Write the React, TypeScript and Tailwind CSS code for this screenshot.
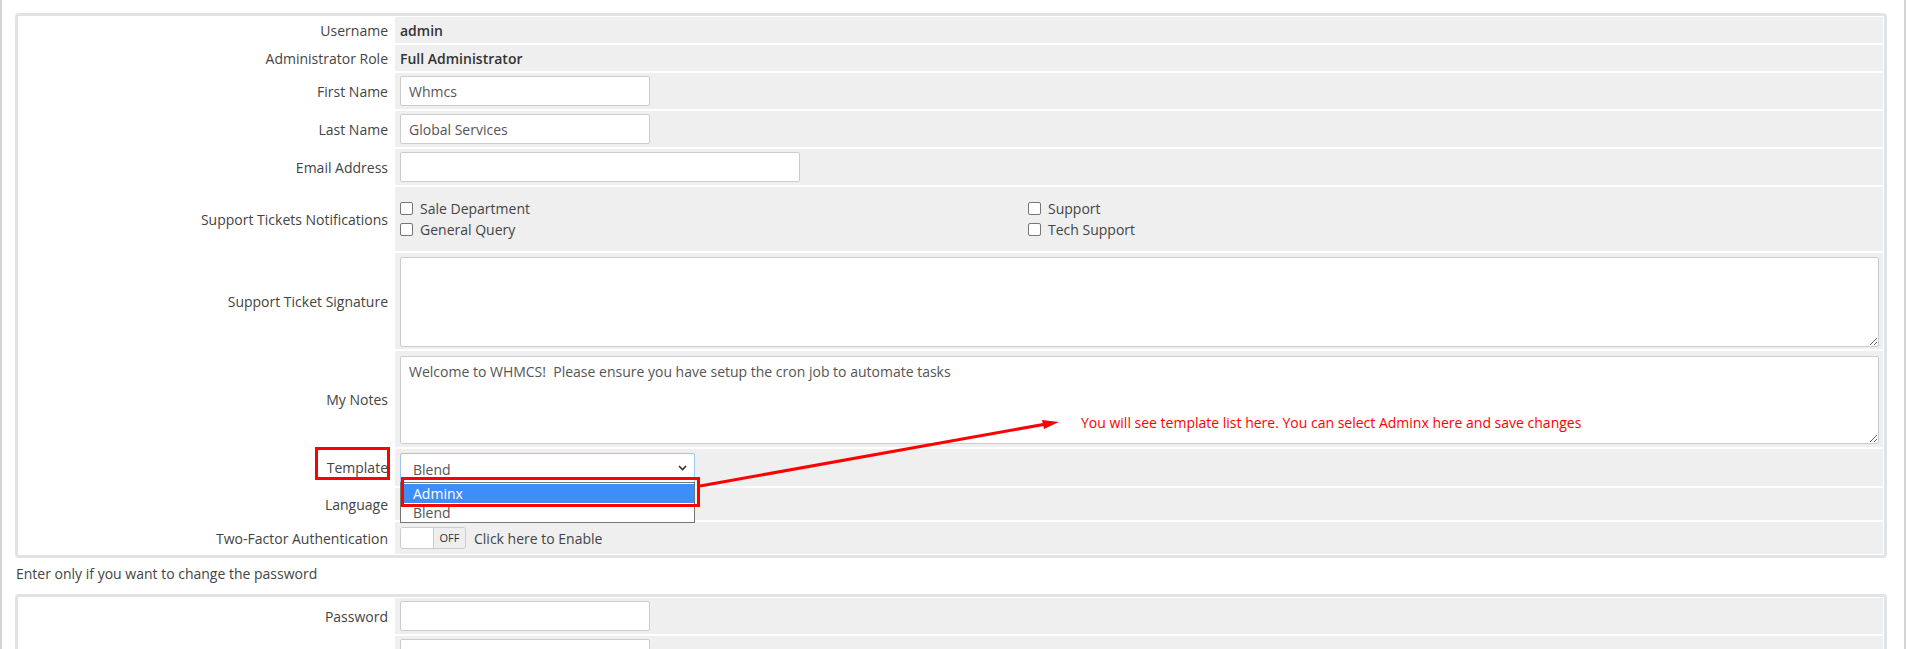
import React from 'react';

type RowProps = {
  label: string;
  h: string;
  align?: string;
  children?: React.ReactNode;
};

const Row: React.FC<RowProps> = ({ label, h, align = 'items-center', children }) => (
  <>
    <div className={`flex items-center justify-end pr-[5px] text-[#444] ${h}`}>{label}</div>
    <div className={`flex ${align} bg-[#efefef] pl-[5px] ${h}`}>{children}</div>
  </>
);

const TextInput: React.FC<{ value?: string; width: string }> = ({ value = '', width }) => (
  <input
    readOnly
    value={value}
    className={`${width} h-[30px] bg-white border border-[#ccc] rounded-[2px] px-[8px] text-[14px] text-[#555] outline-none`}
  />
);

const Check: React.FC<{ label: string }> = ({ label }) => (
  <div className="flex items-center gap-[7px]">
    <span className="w-[13px] h-[13px] rounded-[2px] border border-[#767676] bg-white" />
    <span>{label}</span>
  </div>
);

const Chevron = () => (
  <svg width="9" height="6" viewBox="0 0 9 6" className="text-[#333]">
    <path d="M1 1 L4.5 4.5 L8 1" fill="none" stroke="currentColor" strokeWidth="1.6" />
  </svg>
);

export default function App() {
  return (
    <div className="relative min-h-[649px] bg-white border-l-2 border-r-2 border-[#d4d4d4] pl-[13px] pr-[17px] pt-[13px] pb-6 font-['Open_Sans',sans-serif] text-[14px] text-[#333]">
      {/* Profile box */}
      <div className="rounded-[4px] border-[3px] border-[#e1e4e7] p-[1px]">
        <div className="grid grid-cols-[374px_1fr] gap-[2px]">
          <Row label="Username" h="h-[26px]">
            <span className="font-semibold">admin</span>
          </Row>
          <Row label="Administrator Role" h="h-[26px]">
            <span className="font-semibold">Full Administrator</span>
          </Row>
          <Row label="First Name" h="h-[36px]">
            <TextInput value="Whmcs" width="w-[250px]" />
          </Row>
          <Row label="Last Name" h="h-[36px]">
            <TextInput value="Global Services" width="w-[250px]" />
          </Row>
          <Row label="Email Address" h="h-[36px]">
            <TextInput width="w-[400px]" />
          </Row>
          <Row label="Support Tickets Notifications" h="h-[64px]">
            <div className="grid grid-cols-[628px_1fr] leading-[21px] text-[#444]">
              <div>
                <Check label="Sale Department" />
                <Check label="General Query" />
              </div>
              <div>
                <Check label="Support" />
                <Check label="Tech Support" />
              </div>
            </div>
          </Row>
          <Row label="Support Ticket Signature" h="h-[96px]" align="items-start pt-[4px] pr-[4px]">
            <textarea
              readOnly
              className="w-full h-[90px] bg-white border border-[#ccc] rounded-[2px] px-[8px] py-[5px] text-[14px] text-[#555] outline-none"
            />
          </Row>
          <Row label="My Notes" h="h-[96px]" align="items-start pt-[5px] pr-[4px]">
            <textarea
              readOnly
              value="Welcome to WHMCS!  Please ensure you have setup the cron job to automate tasks"
              className="w-full h-[88px] bg-white border border-[#ccc] rounded-[2px] px-[8px] py-[4px] text-[14px] text-[#555] outline-none whitespace-pre-wrap"
            />
          </Row>
          <Row label="Template" h="h-[37px]" align="items-start pt-[4px]">
            <div className="relative w-[295px] h-[30px] bg-white border border-[#9ec5ea] rounded-[2px] flex items-center justify-between pl-[12px] pr-[7px] text-[#555]">
              <span className="pt-[2px]">Blend</span>
              <Chevron />
              {/* open dropdown list */}
              <div className="absolute left-[-1px] top-[28px] w-[295px] h-[41px] bg-white border border-[#767676] z-10 pt-[1px] text-[14px]">
                <div className="h-[19px] leading-[19px] bg-[#3d8ef8] text-white pl-[12px]">Adminx</div>
                <div className="h-[19px] leading-[19px] text-[#555] pl-[12px]">Blend</div>
              </div>
            </div>
          </Row>
          <Row label="Language" h="h-[32px]">
            <div className="w-[295px] h-[28px] bg-white border border-[#ccc] rounded-[2px]" />
          </Row>
          <Row label="Two-Factor Authentication" h="h-[32px]">
            <div className="flex h-[22px] border border-[#ccc] rounded-[3px] overflow-hidden">
              <span className="w-[32px] bg-white" />
              <span className="w-[32px] bg-[#eee] border-l border-[#ccc] text-[11px] text-[#333] flex items-center justify-center">OFF</span>
            </div>
            <span className="ml-[8px] text-[#444]">Click here to Enable</span>
          </Row>
        </div>
      </div>

      <p className="mt-[7px] leading-[18px] pl-[1px] text-[#444]">Enter only if you want to change the password</p>

      {/* Password box */}
      <div className="mt-[11px] rounded-[4px] border-[3px] border-[#e1e4e7] p-[1px]">
        <div className="grid grid-cols-[374px_1fr] gap-[2px]">
          <Row label="Password" h="h-[36px]">
            <TextInput width="w-[250px]" />
          </Row>
          <Row label="" h="h-[36px]">
            <TextInput width="w-[250px]" />
          </Row>
        </div>
      </div>

      {/* Annotations */}
      <div className="absolute left-[313px] top-[447px] w-[75px] h-[33px] border-[3px] border-[#ff0000] z-20" />
      <div className="absolute left-[399px] top-[477px] w-[299px] h-[30px] border-[3px] border-[#ff0000] z-20" />
      <svg className="absolute left-0 top-0 w-[1906px] h-[649px] pointer-events-none z-20" viewBox="0 0 1906 649">
        <line x1="698" y1="486" x2="1044" y2="424" stroke="#ff0000" strokeWidth="3" />
        <polygon points="1057,422 1042,429 1040,420" fill="#ff0000" />
      </svg>
      <div className="absolute left-[1079px] top-[414px] text-[14px] leading-[18px] text-[#ff0000] z-20">
        You will see template list here. You can select Adminx here and save changes
      </div>
    </div>
  );
}
